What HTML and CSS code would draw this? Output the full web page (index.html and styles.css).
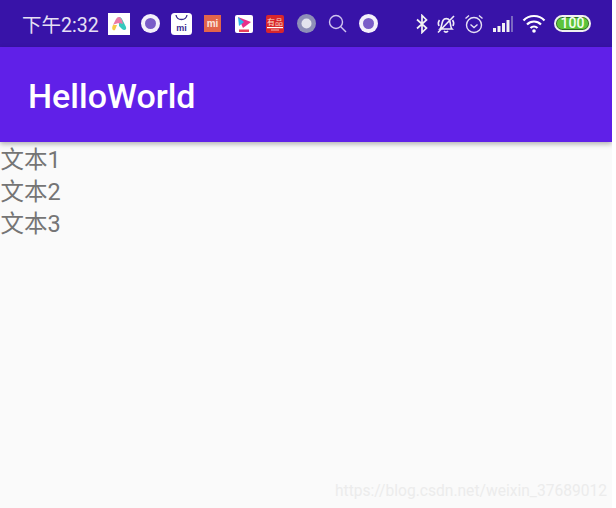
FILE: index.html
```html
<!DOCTYPE html>
<html lang="zh">
<head>
    <meta charset="UTF-8">
    <meta name="viewport" content="width=device-width, initial-scale=1.0">
    <title>HelloWorld</title>
    <link rel="stylesheet" href="styles.css">
</head>
<body>
    <div class="phone">
        <div class="status-bar">
            <span class="time">下午2:32</span>
            <div class="notify-icons">
                <svg width="22" height="22" viewBox="0 0 22 22"><rect width="22" height="22" fill="#fff"/><path d="M11 4 C13 4 14 6 15 8 L18 14 C19 17 16 18 14 16 L11 13 Z" fill="#35c9bd"/><path d="M11 4 C9 4 8 6 7 8 L5 12 C8 10 13 10 15 11 L14 7 C13 5 12 4 11 4 Z" fill="#ea7aa6"/><path d="M5 12 L9 12 L7 17 C5 18 3 16 5 12 Z" fill="#f6cb47"/></svg>
                <svg width="19" height="19" viewBox="0 0 19 19"><circle cx="9.500" cy="9.500" r="9.500" fill="#f4f0fb"/><circle cx="9.500" cy="9.500" r="5.500" fill="#7a5cc8"/></svg>
                <svg width="21" height="22" viewBox="0 0 21 22"><rect width="21" height="22" rx="3.500" fill="#fff"/><path d="M5 2 C6 8 15 8 16 2" fill="none" stroke="#3a2a90" stroke-width="1.300"/><text x="10.500" y="17.500" text-anchor="middle" class="logo-text" font-size="9" fill="#3a2a90">mi</text></svg>
                <svg class="spaced-sm" width="17" height="17" viewBox="0 0 17 17"><rect width="17" height="17" fill="#e2654a"/><text x="8.500" y="12" text-anchor="middle" class="logo-text" font-size="10" fill="#fbe6de">mi</text></svg>
                <svg class="spaced-lg" width="18" height="18" viewBox="0 0 18 18"><rect width="18" height="18" rx="2" fill="#fff"/><path d="M3 2 L16 7 L8 13 Z" fill="#e8308a"/><path d="M3 2 L9 7 L4 11 Z" fill="#2fb4ea"/><rect x="4" y="14.500" width="10" height="2.500" fill="#e8405a"/></svg>
                <svg class="spaced" width="18" height="18" viewBox="0 0 18 18"><rect width="18" height="18" rx="2" fill="#d8262c"/><text x="9" y="10" text-anchor="middle" class="logo-cjk" font-size="8" fill="#fbdccb">有品</text><rect x="1" y="12" width="16" height="1.200" fill="#fff"/><rect x="5" y="14.500" width="8" height="1" fill="#f6b0a8"/></svg>
                <svg class="spaced" width="19" height="19" viewBox="0 0 19 19"><circle cx="9.500" cy="9.500" r="9.500" fill="#8f8fb8"/><circle cx="9.500" cy="9.500" r="5" fill="#e4e4ee"/></svg>
                <svg class="spaced-sm" width="19" height="19" viewBox="0 0 19 19"><circle cx="8" cy="8" r="6.500" fill="none" stroke="#cfc4ee" stroke-width="1.400"/><path d="M12.800 12.800 L18 18" stroke="#cfc4ee" stroke-width="1.400"/></svg>
                <svg class="spaced-sm" width="19" height="19" viewBox="0 0 19 19"><circle cx="9.500" cy="9.500" r="9.500" fill="#f4f0fb"/><circle cx="9.500" cy="9.500" r="5.500" fill="#7a5cc8"/></svg>
            </div>
            <div class="system-icons">
                <svg width="12" height="20" viewBox="0 0 12 20"><path d="M1 5.500 L10.500 14 L6 18.500 V1.500 L10.500 6 L1 14.500" fill="none" stroke="#f2f2f2" stroke-width="1.700"/></svg>
                <svg width="20" height="20" viewBox="0 0 20 20"><path d="M4 15 C6 13 5.500 9 7 6.500 C8.500 4 12 4 13.500 6.500 C15 9 14 13 16 15 Z M8 17 C9 18.500 11 18.500 12 17 M3.500 6 C2 8 2 10 3 12 M16.500 6 C18 8 18 10 17 12 M2 18.500 L18 2" fill="none" stroke="#f0ecf8" stroke-width="1.600"/></svg>
                <svg width="20" height="20" viewBox="0 0 20 20"><circle cx="10" cy="11" r="7.500" fill="none" stroke="#e6e0f4" stroke-width="1.400"/><path d="M6.500 10.500 L10 13.500 L13.500 10.500 M1.500 4.500 L5 1.500 M18.500 4.500 L15 1.500" fill="none" stroke="#e6e0f4" stroke-width="1.400"/></svg>
                <svg width="22" height="18" viewBox="0 0 22 18"><rect x="1" y="13" width="3" height="4" fill="#f2f2f2"/><rect x="5.500" y="11" width="3" height="6" fill="#f2f2f2"/><rect x="10" y="8" width="3" height="9" fill="#f2f2f2"/><rect x="14.500" y="5" width="3" height="12" fill="#f2f2f2"/><rect x="19" y="1" width="2" height="16" fill="#7a68c0"/></svg>
                <svg width="24" height="19" viewBox="0 0 24 19"><path d="M1.500 6.500 C7 0.500 17 0.500 22.500 6.500 M5 10.500 C9 6.500 15 6.500 19 10.500 M8.500 14 C10.500 12 13.500 12 15.500 14" fill="none" stroke="#fff" stroke-width="2.200"/><circle cx="12" cy="17" r="1.800" fill="#fff"/></svg>
                <div class="battery"><span class="battery-level">100</span></div>
            </div>
        </div>
        <div class="app-bar">HelloWorld</div>
        <div class="content">
            <p>文本1</p>
            <p>文本2</p>
            <p>文本3</p>
        </div>
        <div class="watermark">https://blog.csdn.net/weixin_37689012</div>
    </div>
</body>
</html>
```

FILE: styles.css
```css
* {
    margin: 0;
    padding: 0;
    box-sizing: border-box;
}

body {
    background-color: #fff;
    font-family: 'Roboto', 'Noto Sans CJK SC', sans-serif;
}

.phone {
    position: relative;
    width: 612px;
    height: 508px;
    background-color: #fafafa;
    overflow: hidden;
}

.status-bar {
    height: 47px;
    background-color: #3813a8;
    display: flex;
    align-items: center;
    padding-left: 22px;
}

.time {
    color: #e6e0f4;
    font-size: 19.500px;
    width: 86px;
}

.notify-icons {
    display: flex;
    align-items: center;
    gap: 11px;
}

.spaced-sm {
    margin-left: 1px;
}

.spaced {
    margin-left: 2px;
}

.spaced-lg {
    margin-left: 3px;
}

.logo-text {
    font-family: 'Liberation Sans', sans-serif;
    font-weight: bold;
}

.logo-cjk {
    font-family: 'Noto Sans CJK SC', sans-serif;
}

.system-icons {
    display: flex;
    align-items: center;
    gap: 8px;
    margin-left: auto;
    margin-right: 21px;
}

.battery {
    width: 37px;
    height: 17px;
    border: 2px solid #f0f0f0;
    border-radius: 8.500px;
    padding: 1px;
    display: flex;
    background-color: #2c6a24;
}

.battery-level {
    flex: 1;
    background-color: #5cc43a;
    border-radius: 5px;
    color: #f4fff0;
    font-size: 14px;
    font-weight: 500;
    line-height: 11px;
    text-align: center;
}

.app-bar {
    height: 95px;
    background-color: #6020e8;
    box-shadow: 0 2px 5px rgba(0, 0, 0, 0.3);
    color: #fff;
    font-size: 34px;
    line-height: 98px;
    padding-left: 28px;
    font-weight: 500;
}

.content {
    color: #757575;
    font-size: 23.500px;
    line-height: 32px;
    padding-top: 2px;
    padding-left: 0.500px;
}

.watermark {
    position: absolute;
    right: 5px;
    bottom: 8px;
    color: #ececec;
    font-size: 15.600px;
}
```
